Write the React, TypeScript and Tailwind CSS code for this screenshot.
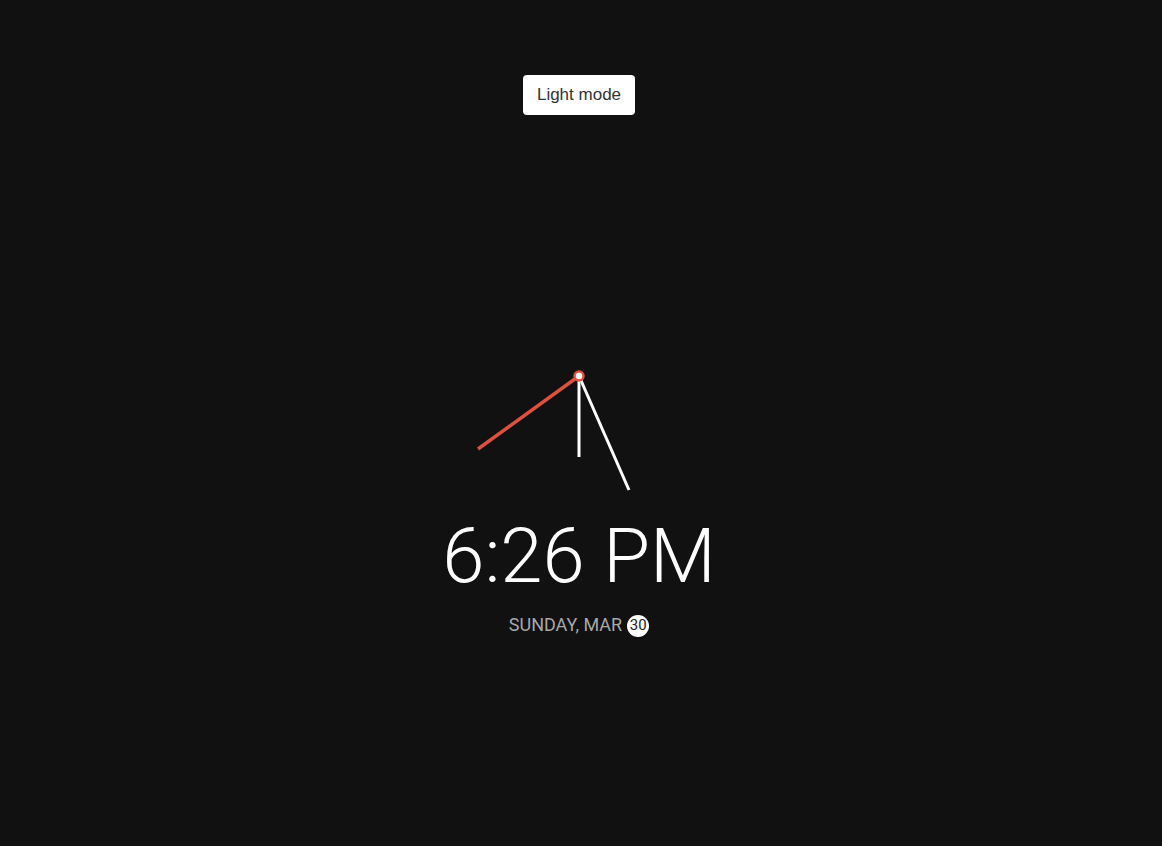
import React from "react";

export default function App() {
  const cx = 130;
  const cy = 130;
  const hour = { x: cx, y: cy + 81 };
  const minute = { x: cx + 50, y: cy + 114 };
  const second = { x: cx - 101, y: cy + 73 };
  return (
    <div className="min-h-screen w-full bg-[#111111] flex flex-col items-center" style={{ fontFamily: "Roboto, 'Noto Sans', sans-serif" }}>
      <button
        className="mt-[75px] h-[40px] w-[112px] rounded-[4px] bg-white text-[17px] text-[#333333] -translate-x-[2px]"
        style={{ fontFamily: "'Liberation Sans', Arial, sans-serif" }}
      >
        Light mode
      </button>
      <svg width="260" height="260" viewBox="0 0 260 260" className="mt-[131px] -translate-x-[2px]">
        <line x1={cx} y1={cy} x2={hour.x} y2={hour.y} stroke="#ffffff" strokeWidth="3" />
        <line x1={cx} y1={cy} x2={minute.x} y2={minute.y} stroke="#ffffff" strokeWidth="3" />
        <line x1={cx} y1={cy} x2={second.x} y2={second.y} stroke="#e0503f" strokeWidth="3.5" />
        <circle cx={cx} cy={cy} r="4.5" fill="#ffffff" stroke="#e0503f" strokeWidth="2.5" />
      </svg>
      <div className="mt-[12px] text-[76px] leading-none font-light text-white -translate-x-[2px]">6:26 PM</div>
      <div className="mt-[17px] flex items-center gap-[5px] text-[18px] font-normal text-[#a8a8a8] uppercase -translate-x-[2px]">
        <span>Sunday, Mar</span>
        <span className="flex h-[22px] w-[22px] translate-y-[1px] items-center justify-center rounded-full bg-white text-[15px] font-normal text-[#222222]">30</span>
      </div>
    </div>
  );
}
